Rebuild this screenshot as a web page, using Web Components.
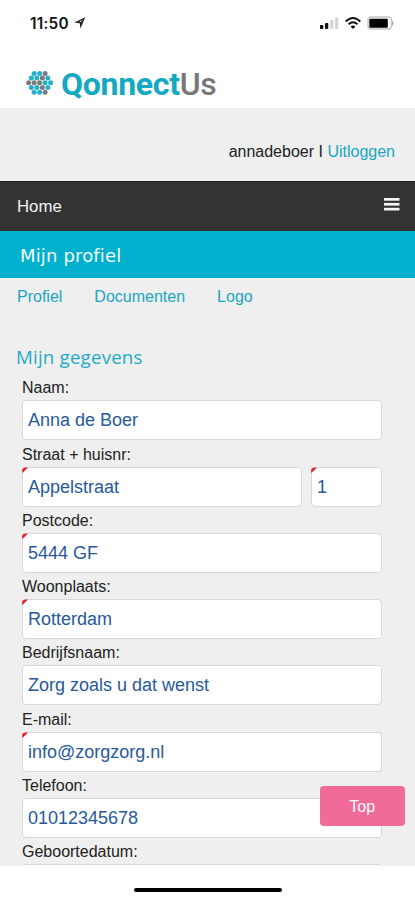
<!DOCTYPE html>
<html lang="nl">
<head>
<meta charset="utf-8">
<meta name="viewport" content="width=device-width">
<title>QonnectUs</title>
<style>
html, body { margin: 0; height: 900px; overflow: hidden; background: #fff; }
body { font: 16px/18px "Liberation Sans", Arial, sans-serif; }
</style>
</head>
<body>
<qu-app></qu-app>
<script>
const define = (name, html) => customElements.define(name, class extends HTMLElement {
  constructor() {
    super();
    this.attachShadow({ mode: 'open' }).innerHTML = html;
  }
});

// Hexagonal dot emblem: t = teal, g = grey, one string per row.
const emblem = ['ttg', 'ttgt', 'gggtt', 'ttgt', 'ttg'].map((row, r) =>
  [...row].map((c, i) =>
    `<circle cx="${39.6 + (i - (row.length - 1) / 2) * 5.5}" cy="${73.4 + r * 4.7}" r="2.5" fill="${c === 't' ? '#25b0ca' : '#7b7b7d'}"/>`
  ).join('')).join('');

define('qu-status', `
<style>
:host { display: flex; height: 48px; box-sizing: border-box; padding: 15px 21px 0 30px; font: 600 15.3px/18px Inter, sans-serif; letter-spacing: .25px; color: #111; }
.loc { margin: 2px 0 0 5px; }
.right { margin: 1px 0 0 auto; }
svg { display: block; }
</style>
<span>11:50</span>
<svg class="loc" width="12" height="12" viewBox="0 0 12 12"><path d="M.2 5.600 11.200.300 6.500 11.400 5.700 6.200Z" fill="#222"/><path d="M5 4.700 8.900 2.700 6.700 5Z" fill="#fff"/></svg>
<svg class="right" width="76" height="16" viewBox="318 16 76 16">
<g fill="#111"><rect x="320" y="25" width="3.3" height="4" rx=".8"/><rect x="325" y="23" width="3.3" height="6" rx=".8"/></g>
<g fill="#d2d2d2"><rect x="330.3" y="20" width="3" height="9" rx=".8"/><rect x="335.2" y="17.500" width="3" height="11.500" rx=".8"/></g>
<g fill="none" stroke="#111" stroke-width="2"><path d="M345.700 21.500Q353 14.500 360.300 21.500"/><path d="M348.600 24.300Q353 20.300 357.400 24.300"/></g>
<path d="M350.600 26.400Q353 24.600 355.400 26.400L353 29Z" fill="#111"/>
<rect x="368" y="17" width="23.500" height="12" rx="3" fill="#fff" stroke="#c4c4c4" stroke-width="1.300"/>
<rect x="369.300" y="18.800" width="18.500" height="8.900" rx="1" fill="#000"/>
<path d="M392 20.500 394 23.200 392 26Z" fill="#aaa"/>
</svg>`);

define('qu-logo', `
<style>
:host { display: flex; height: 60px; box-sizing: border-box; padding: 18px 0 0 25px; font: 700 32px/36px Roboto, sans-serif; color: #13a9c3; }
svg { display: block; margin: 4px 7px 0 0; }
span { letter-spacing: -.3px; }
i { font-style: normal; font-weight: 500; color: #777; }
</style>
<svg width="29" height="26" viewBox="25 70 29 26">${emblem}</svg>
<span>Qonnect<i>Us</i></span>`);

define('qu-account', `
<style>
:host { display: flex; justify-content: flex-end; height: 73px; box-sizing: border-box; padding: 35px 20px 0 0; color: #222; white-space: pre; }
a { color: #1aa5c3; }
</style>
<slot></slot> I <a>Uitloggen</a>`);

define('qu-nav', `
<style>
:host { display: flex; justify-content: space-between; height: 50px; box-sizing: border-box; padding: 16px 15px 0 17px; background: #333; border-top: 1px solid #222; color: #f4f4f4; font-size: 16.800px; }
svg { display: block; }
</style>
<slot></slot>
<svg width="16" height="14" viewBox="0 0 16 14" fill="#f4f4f4"><rect y="0" width="15.500" height="2.700"/><rect y="4.900" width="15.500" height="2.700"/><rect y="9.800" width="15.500" height="2.700"/></svg>`);

define('qu-title', `
<style>
:host { display: block; height: 46.500px; box-sizing: border-box; padding: 14px 0 0 20px; background: #00b0cc; color: #f5fcfd; font: 18px/22px "DejaVu Sans", sans-serif; letter-spacing: .15px; }
</style><slot></slot>`);

define('qu-tabs', `
<style>
:host { display: flex; gap: 32px; height: 65.500px; box-sizing: border-box; padding: 10px 0 0 17px; color: #1aa5c3; }
</style><span>Profiel</span><span>Documenten</span><span>Logo</span>`);

define('qu-heading', `
<style>
:host { display: block; height: 31px; box-sizing: border-box; padding: 1px 0 0 16px; color: #1fabc6; font: 18.700px/25px "Open Sans", sans-serif; letter-spacing: .2px; }
</style><slot></slot>`);

define('qu-row', `
<style>
:host { display: block; height: 66.300px; color: #222; }
.label { height: 26.300px; box-sizing: border-box; padding-top: 5.300px; }
.fields { display: flex; gap: 9px; }
</style><div class="label"><slot name="label"></slot></div><div class="fields"><slot></slot></div>`);

define('qu-field', `
<style>
:host { display: block; position: relative; flex: 1; height: 40px; box-sizing: border-box; padding: 10px 0 0 5px; border: 1px solid #d8d8d8; border-radius: 4px; background: #fff; color: #28599a; font-size: 18px; }
:host([short]) { flex: 0 0 71px; }
svg { display: none; position: absolute; left: -1px; top: -1px; }
:host([required]) svg { display: block; }
</style><slot></slot><svg width="7" height="7" viewBox="0 0 7 7"><path d="M0 3.500Q.5.500 3.500.500H6L.5 6Z" fill="#e2222c"/></svg>`);

define('qu-top', `
<style>
:host { position: absolute; left: 319.500px; top: 786px; width: 85.500px; height: 40px; box-sizing: border-box; padding-top: 12px; border-radius: 4px; background: #f06a9a; color: #fff; text-align: center; }
</style><slot></slot>`);

define('qu-app', `
<style>
:host { display: block; position: relative; width: 415px; height: 900px; overflow: hidden; background: #fff; }
.page { height: 758px; overflow: hidden; background: #efefef; }
form { margin: 0 33px 0 22px; }
.bar { width: 148px; height: 4.500px; margin: 21.500px 0 0 134px; border-radius: 3px; background: #000; }
</style>
<qu-status></qu-status>
<qu-logo></qu-logo>
<div class="page">
<qu-account>annadeboer</qu-account>
<qu-nav>Home</qu-nav>
<qu-title>Mijn profiel</qu-title>
<qu-tabs></qu-tabs>
<qu-heading>Mijn gegevens</qu-heading>
<form>
<qu-row><span slot="label">Naam:</span><qu-field>Anna de Boer</qu-field></qu-row>
<qu-row><span slot="label">Straat + huisnr:</span><qu-field required>Appelstraat</qu-field><qu-field short required>1</qu-field></qu-row>
<qu-row><span slot="label">Postcode:</span><qu-field required>5444 GF</qu-field></qu-row>
<qu-row><span slot="label">Woonplaats:</span><qu-field required>Rotterdam</qu-field></qu-row>
<qu-row><span slot="label">Bedrijfsnaam:</span><qu-field>Zorg zoals u dat wenst</qu-field></qu-row>
<qu-row><span slot="label">E-mail:</span><qu-field required>info@zorgzorg.nl</qu-field></qu-row>
<qu-row><span slot="label">Telefoon:</span><qu-field>01012345678</qu-field></qu-row>
<qu-row><span slot="label">Geboortedatum:</span><qu-field></qu-field></qu-row>
</form>
</div>
<div class="bar"></div>
<qu-top>Top</qu-top>`);
</script>
</body>
</html>
